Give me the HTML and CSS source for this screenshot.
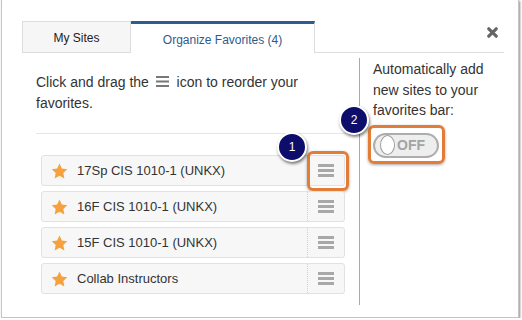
FILE: index.html
```html
<!DOCTYPE html>
<html lang="en">

<head>
    <meta charset="UTF-8">
    <meta name="viewport" content="width=device-width, initial-scale=1.0">
    <title>Organize Favorites</title>
    <link rel="stylesheet" href="styles.css">
</head>

<body>
    <div class="dialog">
        <div class="tabs-bar">
            <div class="tab">My Sites</div>
            <div class="tab active">Organize Favorites (4)</div>
            <button type="button" class="close-button" aria-label="Close">
                <svg width="11" height="11" viewBox="0 0 11 11">
                    <path d="M1.8 1.8L9.2 9.2M9.2 1.8L1.8 9.2" stroke="#666" stroke-width="3.2" stroke-linecap="round"></path>
                </svg>
            </button>
        </div>

        <div class="panes">
            <div class="pane-left">
                <p class="intro">Click and drag the
                    <svg class="inline-handle" width="13" height="11" viewBox="0 0 13 11">
                        <rect x="0" y="0" width="13" height="2" fill="#777"></rect>
                        <rect x="0" y="4.5" width="13" height="2" fill="#777"></rect>
                        <rect x="0" y="9" width="13" height="2" fill="#777"></rect>
                    </svg>
                    icon to reorder your favorites.</p>
                <div class="separator"></div>

                <ul class="fav-list">
                    <li class="fav-item">
                        <span class="star"><svg width="17" height="16" viewBox="0 0 24 23"><path d="M12 0.8l3.4 7.2 7.8 1-5.7 5.4 1.5 7.8L12 18.4l-7 3.8 1.5-7.8L0.8 9l7.8-1z" fill="#f7a13d"></path></svg></span>
                        <span class="fav-title">17Sp CIS 1010-1 (UNKX)</span>
                        <span class="handle"><i></i><i></i><i></i></span>
                        <span class="callout handle-callout"></span>
                        <span class="badge badge-one">1</span>
                    </li>
                    <li class="fav-item">
                        <span class="star"><svg width="17" height="16" viewBox="0 0 24 23"><path d="M12 0.8l3.4 7.2 7.8 1-5.7 5.4 1.5 7.8L12 18.4l-7 3.8 1.5-7.8L0.8 9l7.8-1z" fill="#f7a13d"></path></svg></span>
                        <span class="fav-title">16F CIS 1010-1 (UNKX)</span>
                        <span class="handle"><i></i><i></i><i></i></span>
                    </li>
                    <li class="fav-item">
                        <span class="star"><svg width="17" height="16" viewBox="0 0 24 23"><path d="M12 0.8l3.4 7.2 7.8 1-5.7 5.4 1.5 7.8L12 18.4l-7 3.8 1.5-7.8L0.8 9l7.8-1z" fill="#f7a13d"></path></svg></span>
                        <span class="fav-title">15F CIS 1010-1 (UNKX)</span>
                        <span class="handle"><i></i><i></i><i></i></span>
                    </li>
                    <li class="fav-item">
                        <span class="star"><svg width="17" height="16" viewBox="0 0 24 23"><path d="M12 0.8l3.4 7.2 7.8 1-5.7 5.4 1.5 7.8L12 18.4l-7 3.8 1.5-7.8L0.8 9l7.8-1z" fill="#f7a13d"></path></svg></span>
                        <span class="fav-title">Collab Instructors</span>
                        <span class="handle"><i></i><i></i><i></i></span>
                    </li>
                </ul>
            </div>

            <div class="pane-right">
                <p class="auto-add">Automatically add new sites to your favorites bar:</p>
                <div class="toggle-wrap">
                    <div class="toggle">
                        <span class="knob"></span>
                        <span class="toggle-label">OFF</span>
                    </div>
                    <span class="callout toggle-callout"></span>
                    <span class="badge badge-two">2</span>
                </div>
            </div>
        </div>
    </div>
</body>

</html>
```

FILE: styles.css
```css
body {
    margin: 0;
    background-color: #ffffff;
    font-family: "Liberation Sans", Arial, sans-serif;
    color: #333333;
}

.dialog {
    box-sizing: border-box;
    width: 518px;
    height: 318px;
    margin-left: 1px;
    padding: 21px 0 0 20px;
    border: 1px solid #c4c4c4;
    border-top: none;
    box-shadow: 1px 1px 2px rgba(0, 0, 0, 0.45);
    background-color: #ffffff;
}

.tabs-bar {
    display: flex;
    align-items: flex-start;
    width: 482px;
    height: 31px;
    border-bottom: 1px solid #dddddd;
}

.tab {
    box-sizing: border-box;
    height: 32px;
    padding-top: 9px;
    font-size: 12px;
    text-align: center;
    background-color: #f6f6f6;
    border: 1px solid #dddddd;
    border-bottom: none;
}

.tab:first-child {
    width: 109px;
    color: #222222;
    border-bottom: 1px solid #dddddd;
}

.tab.active {
    width: 184px;
    padding-top: 9px;
    background-color: #ffffff;
    border-top: 3px solid #2b5d95;
    border-left: none;
    color: #2e5b8e;
}

.close-button {
    display: flex;
    margin: 6px 6px 0 auto;
    padding: 0;
    border: none;
    background: none;
    cursor: pointer;
}

.panes {
    display: flex;
    height: 252px;
}

.pane-left {
    box-sizing: border-box;
    width: 337px;
    padding: 19px 13px 0 14px;
}

.intro {
    margin: 0;
    font-size: 14px;
    line-height: 21px;
}

.inline-handle {
    margin: 0 4px 0 3px;
    vertical-align: 0;
}

.separator {
    height: 1px;
    margin-top: 19px;
    background-color: #e6e6e6;
}

.fav-list {
    list-style: none;
    margin: 21px 1px 0 5px;
    padding: 0;
}

.fav-item {
    position: relative;
    display: flex;
    align-items: center;
    box-sizing: border-box;
    height: 31px;
    margin-bottom: 5px;
    background-color: #f7f7f7;
    border: 1px solid #e2e2e2;
    border-radius: 3px;
}

.star {
    display: flex;
    margin-left: 9px;
}

.fav-title {
    flex: 1;
    margin-left: 9px;
    font-size: 13px;
}

.handle {
    display: flex;
    flex-direction: column;
    justify-content: center;
    align-items: center;
    align-self: stretch;
    gap: 2.5px;
    width: 36px;
    border-left: 1px dotted #d0d0d0;
}

.handle i {
    display: block;
    width: 16px;
    height: 2.5px;
    background-color: #a8a8a8;
}

.pane-right {
    flex: 1;
    margin-top: 5px;
    padding: 1px 0 0 13px;
    border-left: 1px solid #a9a9a9;
}

.auto-add {
    width: 130px;
    margin: 0;
    font-size: 14px;
    line-height: 20.5px;
}

.toggle-wrap {
    position: relative;
    width: 66px;
    margin-top: 12px;
}

.toggle {
    display: flex;
    align-items: center;
    box-sizing: border-box;
    width: 66px;
    height: 25px;
    padding-left: 5px;
    border: 2px solid #adadad;
    border-radius: 13px;
    background-color: #eeeeee;
}

.knob {
    box-sizing: border-box;
    width: 15px;
    height: 20px;
    border: 1.5px solid #9c9c9c;
    border-radius: 50%;
    background-color: #ffffff;
}

.toggle-label {
    margin-left: 2px;
    font-size: 14px;
    font-weight: bold;
    color: #a3a3a3;
}

/* annotation overlays */
.callout {
    position: absolute;
    box-sizing: border-box;
    border: 3px solid #e27c37;
    border-radius: 6px;
    box-shadow: 0 1px 3px rgba(0, 0, 0, 0.35);
}

.handle-callout {
    left: 265px;
    top: -5px;
    width: 42px;
    height: 40px;
}

.toggle-callout {
    left: -5px;
    top: -8px;
    width: 77px;
    height: 39px;
}

.badge {
    position: absolute;
    box-sizing: border-box;
    width: 30px;
    height: 30px;
    border: 2px solid #ffffff;
    border-radius: 50%;
    background-color: #0d0d6b;
    box-shadow: 1px 2px 3px rgba(0, 0, 0, 0.5);
    color: #ffffff;
    font-size: 12px;
    line-height: 26px;
    text-align: center;
}

.badge-one {
    left: 235px;
    top: -24px;
}

.badge-two {
    left: -34px;
    top: -28px;
}
```
